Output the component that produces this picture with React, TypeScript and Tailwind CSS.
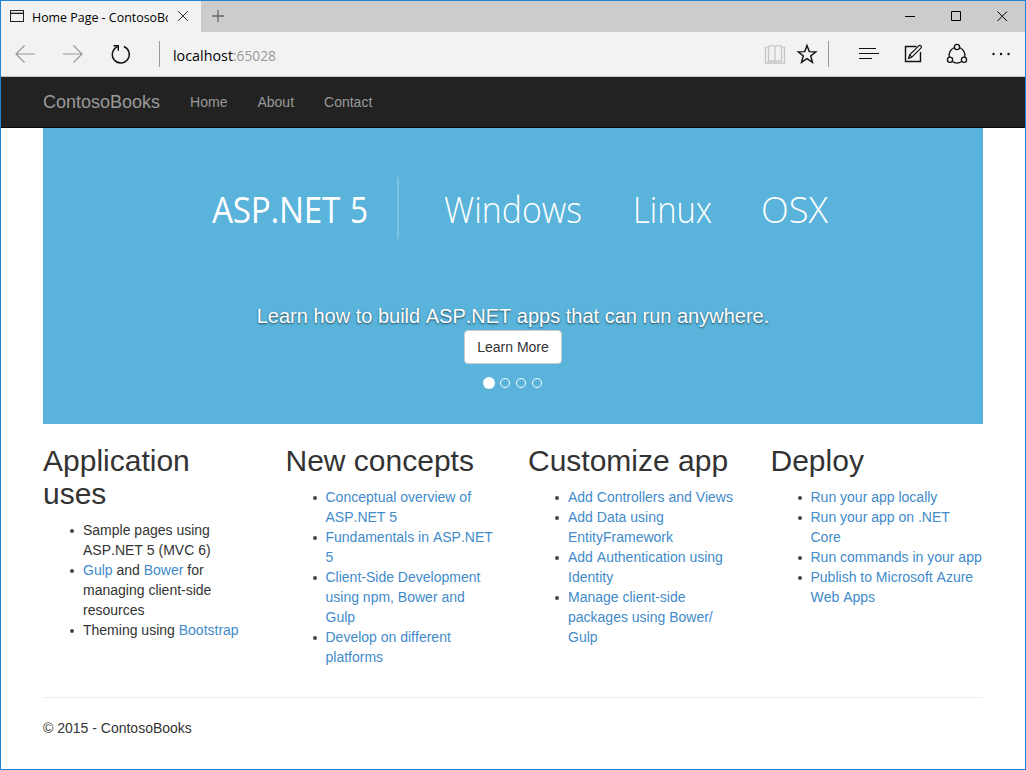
import React from "react";

const UI = "font-['Open_Sans','Noto_Sans',sans-serif]";

function A({ children }: { children: React.ReactNode }) {
  return <a href="#" className="text-[#428bca]">{children}</a>;
}

function Li({ children }: { children: React.ReactNode }) {
  return (
    <li className="flex">
      <span className="-ml-[13px] mr-[9px] mt-[9px] size-1 shrink-0 rounded-full bg-[#444]" />
      <span>{children}</span>
    </li>
  );
}

function Column({ title, children }: { title: React.ReactNode; children: React.ReactNode }) {
  return (
    <section className="px-[15px]">
      <h2 className="mt-5 mb-2.5 text-[30px] leading-[33px]">{title}</h2>
      <ul className="mb-2.5 pl-10">{children}</ul>
    </section>
  );
}

function TitleBar() {
  return (
    <div className="flex h-[31px] bg-[#cccccc]">
      <div className="flex w-[200px] items-center bg-[#f2f2f2] pl-[9px]">
        <svg width="15" height="13" viewBox="0 0 15 13" className="-mt-px shrink-0" fill="none" stroke="#222" shapeRendering="crispEdges">
          <path d="M.5 .5h13v11H.5zM.5 3.5h13" />
          <path d="M1 2h12" stroke="#aaa" />
        </svg>
        <div className={`ml-[7px] mt-[2px] w-[136px] overflow-hidden whitespace-nowrap text-black ${UI}`}>
          <svg width="136" height="20" className="block" overflow="hidden">
            <text x="0" y="14" fontSize="12.5" textLength="148" lengthAdjust="spacingAndGlyphs">Home Page - ContosoBoo</text>
          </svg>
        </div>
        <svg width="12" height="12" viewBox="0 0 12 12" className="-mt-px ml-[9px]" fill="none" stroke="#333">
          <path d="M1 1l10 10M11 1L1 11" />
        </svg>
      </div>
      <svg width="12" height="12" viewBox="0 0 12 12" className="ml-[11px] mt-[9px]" fill="none" stroke="#666" strokeWidth="1.3">
        <path d="M6 0v12M0 6h12" />
      </svg>
      <div className="ml-auto mr-[17px] flex items-center gap-[35px]">
        <svg width="11" height="11" viewBox="0 0 11 11" stroke="#000" fill="none"><path d="M0 5.5h10" /></svg>
        <svg width="11" height="11" viewBox="0 0 11 11" stroke="#000" fill="none"><path d="M.5 .5h9v9h-9z" /></svg>
        <svg width="11" height="11" viewBox="0 0 11 11" stroke="#000" fill="none"><path d="M.5 .5l9.500 9.500M10 .5L.5 10" /></svg>
      </div>
    </div>
  );
}

function Toolbar() {
  return (
    <div className="flex h-[45px] items-start border-b border-[#c4c4c4] bg-[#f2f2f2]">
      <svg width="160" height="44" viewBox="1 32 160 44" className="shrink-0" fill="none" strokeWidth="1.2">
        <path d="M24.5 45.5L16 54l8.500 8.500M16 54h19" stroke="#999" />
        <path d="M73.500 45.500L82 54l-8.500 8.500M82 54H63" stroke="#999" />
        <path d="M117.500 46.600a8.500 8.500 0 1 0 6.300-.1" stroke="#111" strokeWidth="1.400" />
        <path d="M113.500 45.700h4.800v5" stroke="#111" strokeWidth="1.400" />
        <path d="M159.500 41v26" stroke="#999" strokeWidth="1" />
      </svg>
      <div className={`ml-[12px] mt-[12px] ${UI}`}>
        <svg width="110" height="24" className="block">
          <text x="0" y="17" fontSize="15" fill="#000" textLength="60" lengthAdjust="spacingAndGlyphs">localhost</text>
          <text x="60" y="17" fontSize="15" fill="#999" textLength="43" lengthAdjust="spacingAndGlyphs">:65028</text>
        </svg>
      </div>
      <svg width="265" height="44" viewBox="760 32 265 44" className="ml-auto shrink-0" fill="none" stroke="#111">
        <g stroke="#c6c6c6">
          <path d="M767.500 47.500h-2v15.500h19V47.500h-2" strokeWidth="1.300" />
          <path d="M775 46.500c-1.500-.8-5-.8-6.500-.2v14.700h13V46.300c-1.500-.6-5-.6-6.500 .2zM775 46.500V62" strokeWidth="1.300" />
        </g>
        <path d="M807 45.500l2.300 6.100 6.500.3-5.100 4 1.800 6.400-5.500-3.600-5.500 3.600 1.800-6.400-5.100-4 6.500-.3z" strokeWidth="1.400" />
        <path d="M828.500 41v26" stroke="#999" />
        <path d="M859 48.500h17M859 53.500h20M859 58.500h13" />
        <path d="M916.500 46.500H905.500V61.500H920.500V52" strokeWidth="1.400" />
        <path d="M908.500 58.500l1.200-3.600 9.200-9.200c1.500-1 3.200.7 2.200 2.200l-9.200 9.200zM909.700 54.900l2.200 2.200" strokeWidth="1.200" />
        <g strokeWidth="1.300">
          <circle cx="957" cy="47" r="2.600" />
          <circle cx="950" cy="59.700" r="2.600" />
          <circle cx="964" cy="59.700" r="2.600" />
          <path d="M954.400 47.500a8.500 8.500 0 0 0-5.200 9.500M959.600 47.500a8.500 8.500 0 0 1 5.200 9.500M952.300 61.500a8.500 8.500 0 0 0 9.400 0" />
        </g>
        <g fill="#111" stroke="none">
          <circle cx="993.500" cy="54" r="1.200" /><circle cx="1001" cy="54" r="1.200" /><circle cx="1008.500" cy="54" r="1.200" />
        </g>
      </svg>
    </div>
  );
}

function Banner() {
  return (
    <div className="flex h-[296px] flex-col items-center bg-[#59b3da] text-white">
      <svg width="940" height="172" viewBox="43 128 940 172" className="block shrink-0 font-['Open_Sans','Noto_Sans',sans-serif]" fill="#fff">
        <g fontSize="36.500" fontWeight="500">
          <text x="212" y="222.500" textLength="128" lengthAdjust="spacingAndGlyphs" letterSpacing="-.3">ASP.NET</text>
          <text x="350" y="222.500" textLength="18" lengthAdjust="spacingAndGlyphs">5</text>
        </g>
        <rect x="397" y="177" width="2" height="62" fillOpacity=".22" />
        <g fontWeight="300" fontSize="36">
          <text x="444" y="222.500" textLength="138" lengthAdjust="spacingAndGlyphs">Windows</text>
          <text x="633" y="222.500" textLength="79" lengthAdjust="spacingAndGlyphs">Linux</text>
          <text x="761" y="222.500" textLength="67" lengthAdjust="spacingAndGlyphs">OSX</text>
        </g>
      </svg>
      <p className="mt-[2px] whitespace-nowrap text-[20px] leading-[28px] [text-shadow:0_1px_2px_rgba(0,0,0,0.6)]">
        Learn how to build ASP.NET apps that can run anywhere.
      </p>
      <button className="h-[34px] w-[98px] rounded-[4px] border border-[#ccc] bg-white text-[14px] leading-[20px] text-[#333]">
        Learn More
      </button>
      <div className="mt-[13px] mr-[2px] flex h-3 items-center gap-[6px]">
        <span className="-mr-px size-3 rounded-full bg-white" />
        <span className="size-2.5 rounded-full border border-white" />
        <span className="size-2.5 rounded-full border border-white" />
        <span className="size-2.5 rounded-full border border-white" />
      </div>
    </div>
  );
}

export default function App() {
  return (
    <div className="h-[770px] w-[1026px] overflow-hidden border border-[#2283d4] bg-white font-['Liberation_Sans',Arial,sans-serif] text-[14px] leading-[20px] text-[#333] [font-kerning:none]">
      <TitleBar />
      <Toolbar />
      <nav className="flex h-[51px] items-center border-b border-[#080808] bg-[#222] pl-[42px] text-[#999]">
        <a href="#" className="mr-[30px] text-[18px]">ContosoBooks</a>
        <div className="flex gap-[30px]">
          <a href="#">Home</a>
          <a href="#">About</a>
          <a href="#">Contact</a>
        </div>
      </nav>
      <main className="ml-[42px] w-[940px]">
        <Banner />
        <div className="-mx-[15px] grid h-[253px] grid-cols-4">
          <Column title="Application uses">
            <Li>Sample pages using ASP.NET 5 (MVC 6)</Li>
            <Li><A>Gulp</A> and <A>Bower</A> for managing client-side resources</Li>
            <Li>Theming using <A>Bootstrap</A></Li>
          </Column>
          <Column title="New concepts">
            <Li><A>Conceptual overview of ASP.NET 5</A></Li>
            <Li><A>Fundamentals in ASP.NET 5</A></Li>
            <Li><A>Client-Side Development using npm, Bower and Gulp</A></Li>
            <Li><A>Develop on different platforms</A></Li>
          </Column>
          <Column title="Customize app">
            <Li><A>Add Controllers and Views</A></Li>
            <Li><A>Add Data using EntityFramework</A></Li>
            <Li><A>Add Authentication using Identity</A></Li>
            <Li><A>Manage client-side packages using Bower/<br />Gulp</A></Li>
          </Column>
          <Column title="Deploy">
            <Li><A>Run your app locally</A></Li>
            <Li><A>Run your app on .NET Core</A></Li>
            <Li><A>Run commands in your app</A></Li>
            <Li><A>Publish to Microsoft Azure Web Apps</A></Li>
          </Column>
        </div>
        <hr className="mt-5 mb-5 border-[#eee]" />
        <footer>© 2015 - ContosoBooks</footer>
      </main>
    </div>
  );
}
